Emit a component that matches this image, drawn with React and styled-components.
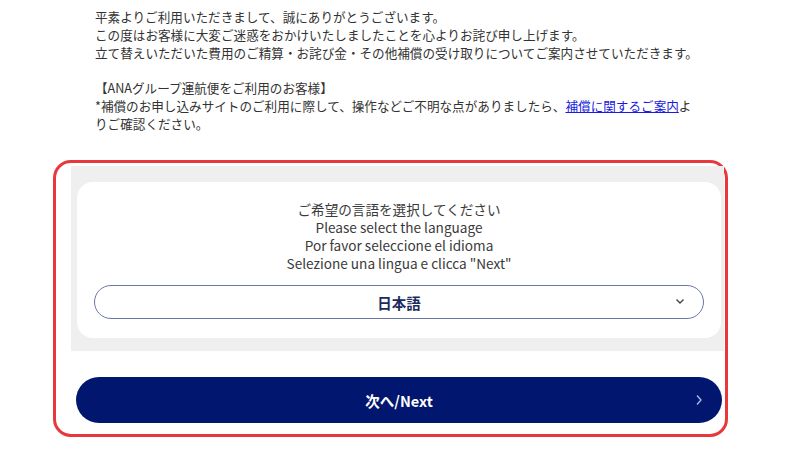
import React from "react";
import styled, { createGlobalStyle } from "styled-components";

const Global = createGlobalStyle`
  html, body { margin: 0; padding: 0; background: #ffffff; }
  body { font-family: "Noto Sans CJK JP", "Noto Sans", sans-serif; color: #333333; }
`;

const Page = styled.div`
  width: 800px;
  height: 450px;
  overflow: hidden;
  padding-top: 8px;
  box-sizing: border-box;
`;

const Intro = styled.div`
  margin-left: 95px;
  width: 612px;
  font-size: 12.6px;
  line-height: 18px;
  color: #333333;
`;

const Para = styled.p`
  margin: 0 0 17px 0;
`;

const Link = styled.a`
  color: #1a1ae0;
  text-decoration: underline;
`;

const Frame = styled.div`
  margin: 27px 0 0 53px;
  width: 675px;
  height: 277px;
  box-sizing: border-box;
  border: 3px solid #e8383b;
  border-radius: 18px;
  display: flex;
  flex-direction: column;
`;

const Panel = styled.div`
  margin: 3px 1px 0 15px;
  background: #efefef;
  padding: 16px 3px 13px 6px;
`;

const Card = styled.div`
  background: #ffffff;
  border-radius: 16px;
  padding: 18px 17px 19px 17px;
  display: flex;
  flex-direction: column;
  align-items: stretch;
`;

const Prompt = styled.div`
  display: flex;
  flex-direction: column;
  align-items: center;
  font-size: 13.6px;
  color: #3a3a3a;
`;

const PromptLine = styled.div`
  height: 18px;
  line-height: 18px;
  white-space: nowrap;
`;

const Select = styled.div`
  margin-top: 13px;
  height: 34px;
  box-sizing: border-box;
  border: 1px solid #6b78a6;
  border-radius: 17px;
  display: flex;
  align-items: center;
  justify-content: center;
  position: relative;
  font-size: 14.5px;
  font-weight: 700;
  color: #1c2a5e;
`;

const SelectChevron = styled.svg`
  position: absolute;
  right: 18px;
  top: 12px;
`;

const NextButton = styled.button`
  margin: 26px 3px 0 20px;
  height: 46px;
  border: none;
  border-radius: 23px;
  background: #01166e;
  color: #ffffff;
  font-family: "Noto Sans CJK JP", "Noto Sans", sans-serif;
  font-size: 14.5px;
  font-weight: 700;
  display: flex;
  align-items: center;
  justify-content: center;
  position: relative;
  padding: 0;
`;

const ButtonChevron = styled.svg`
  position: absolute;
  right: 19px;
  top: 17px;
`;

const prompts = [
  "ご希望の言語を選択してください",
  "Please select the language",
  "Por favor seleccione el idioma",
  'Selezione una lingua e clicca "Next"',
];

export default function App() {
  return (
    <Page>
      <Global />
      <Intro>
        <Para>
          平素よりご利用いただきまして、誠にありがとうございます。
          <br />
          この度はお客様に大変ご迷惑をおかけいたしましたことを心よりお詫び申し上げます。
          <br />
          立て替えいただいた費用のご精算・お詫び金・その他補償の受け取りについてご案内させていただきます。
        </Para>
        <Para>
          【ANAグループ運航便をご利用のお客様】
          <br />
          *補償のお申し込みサイトのご利用に際して、操作などご不明な点がありましたら、
          <Link href="#">補償に関するご案内</Link>よ
          <br />
          りご確認ください。
        </Para>
      </Intro>
      <Frame>
        <Panel>
          <Card>
            <Prompt>
              {prompts.map((p) => (
                <PromptLine key={p}>{p}</PromptLine>
              ))}
            </Prompt>
            <Select>
              日本語
              <SelectChevron width="10" height="7" viewBox="0 0 10 7">
                <path d="M1.5 1.5 L5 5 L8.5 1.5" fill="none" stroke="#444" strokeWidth="1.4" />
              </SelectChevron>
            </Select>
          </Card>
        </Panel>
        <NextButton>
          次へ/Next
          <ButtonChevron width="8" height="12" viewBox="0 0 8 12">
            <path d="M2 1.5 L6 6 L2 10.5" fill="none" stroke="#aab4e6" strokeWidth="1.4" />
          </ButtonChevron>
        </NextButton>
      </Frame>
    </Page>
  );
}
